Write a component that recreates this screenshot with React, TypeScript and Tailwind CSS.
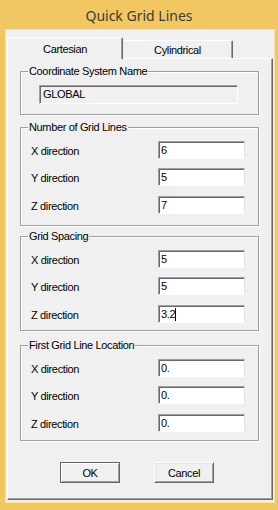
import React from "react";

const inputCls =
  "h-[18px] w-[87px] bg-white border border-t-[#a0a0a0] border-l-[#a0a0a0] border-b-white border-r-[#e3e3e3] shadow-[inset_1px_1px_0_#696969] pl-[2px] flex items-center text-black";

const Group = ({
  title,
  className,
  children,
}: {
  title: string;
  className: string;
  children?: React.ReactNode;
}) => {
  return (
    <div
      className={`relative ml-[12px] w-[239px] border border-[#a0a0a0] shadow-[inset_1px_1px_0_#fff,1px_1px_0_#fff] ${className}`}
    >
      <span className="absolute left-[7px] -top-[8px] bg-[#f0f0f0] px-[1px] leading-[14px] whitespace-nowrap">
        {title}
      </span>
      {children}
    </div>
  );
};

const Row = ({ label, value, caret, className }: { label: string; value: string; caret?: boolean; className?: string }) => {
  return (
    <div className={`flex items-center h-[18px] ${className ?? ""}`}>
      <span className="w-[137px] pl-[10px] pt-[2px]">{label}</span>
      <div className={inputCls}>
        <span className="leading-[14px]">{value}</span>
        {caret && <span className="w-px h-[13px] bg-black" />}
      </div>
    </div>
  );
};

export default function App() {
  return (
    <div className="w-[278px] h-[510px] bg-[#f1c761] pt-[30px] pl-[6px] pr-[4px] pb-[8px] font-['Liberation_Sans',Arial,sans-serif] text-[11px] tracking-[-0.35px] text-black select-none">
      <div className="absolute top-0 left-0 w-[278px] h-[30px] flex items-center justify-center text-[14px] tracking-normal text-[#3b3b3b] font-['Noto_Sans',sans-serif]">
        Quick Grid Lines
      </div>
      <div className="h-[472px] bg-[#f0f0f0] pt-[7px] pl-[1px] pr-[1px] shadow-[0_0_0_1px_#f7e2ad]">
        <div className="flex items-end h-[21px]">
          <div className="relative z-10 -mb-[1px] h-[22px] w-[116px] bg-[#f0f0f0] border-t border-l border-t-white border-l-white border-r border-r-[#696969] rounded-tl-[2px] rounded-tr-[2px] shadow-[inset_-1px_0_0_#a0a0a0] flex items-center justify-center pt-[1px]">
            Cartesian
          </div>
          <div className="h-[18px] w-[110px] bg-[#f0f0f0] border-t border-t-white border-r border-r-[#696969] rounded-tr-[2px] shadow-[inset_-1px_0_0_#a0a0a0] flex items-center justify-center pt-[2px]">
            Cylindrical
          </div>
        </div>
        <div className="h-[442px] border border-t-white border-l-white border-r-[#696969] border-b-[#696969] shadow-[inset_-1px_-1px_0_#a0a0a0] flex flex-col">
          <Group title="Coordinate System Name" className="mt-[12px] h-[44px]">
            <div className="ml-[18px] mt-[13px] h-[19px] w-[199px] border border-t-[#a0a0a0] border-l-[#a0a0a0] border-b-white border-r-white shadow-[inset_1px_1px_0_#696969] pl-[3px] flex items-center text-black">
              GLOBAL
            </div>
          </Group>
          <Group title="Number of Grid Lines" className="mt-[12px] h-[99px]">
            <Row label="X direction" value="6" className="mt-[13px]" />
            <Row label="Y direction" value="5" className="mt-[9px]" />
            <Row label="Z direction" value="7" className="mt-[10px]" />
          </Group>
          <Group title="Grid Spacing" className="mt-[10px] h-[95px]">
            <Row label="X direction" value="5" className="mt-[13px]" />
            <Row label="Y direction" value="5" className="mt-[9px]" />
            <Row label="Z direction" value="3.2" caret className="mt-[10px]" />
          </Group>
          <Group title="First Grid Line Location" className="mt-[14px] h-[96px]">
            <Row label="X direction" value="0." className="mt-[13px]" />
            <Row label="Y direction" value="0." className="mt-[9px]" />
            <Row label="Z direction" value="0." className="mt-[10px]" />
          </Group>
          <div className="flex mt-[21px]">
            <button className="ml-[52px] h-[21px] w-[60px] bg-[#f0f0f0] border border-[#646464] shadow-[inset_1px_1px_0_#fff,inset_-1px_-1px_0_#a0a0a0] flex items-center justify-center pt-[1px]">
              OK
            </button>
            <button className="ml-[34px] h-[21px] w-[60px] bg-[#f0f0f0] border border-t-white border-l-white border-r-[#696969] border-b-[#696969] shadow-[inset_1px_1px_0_#e3e3e3,inset_-1px_-1px_0_#a0a0a0] flex items-center justify-center pt-[1px]">
              Cancel
            </button>
          </div>
        </div>
      </div>
    </div>
  );
}
